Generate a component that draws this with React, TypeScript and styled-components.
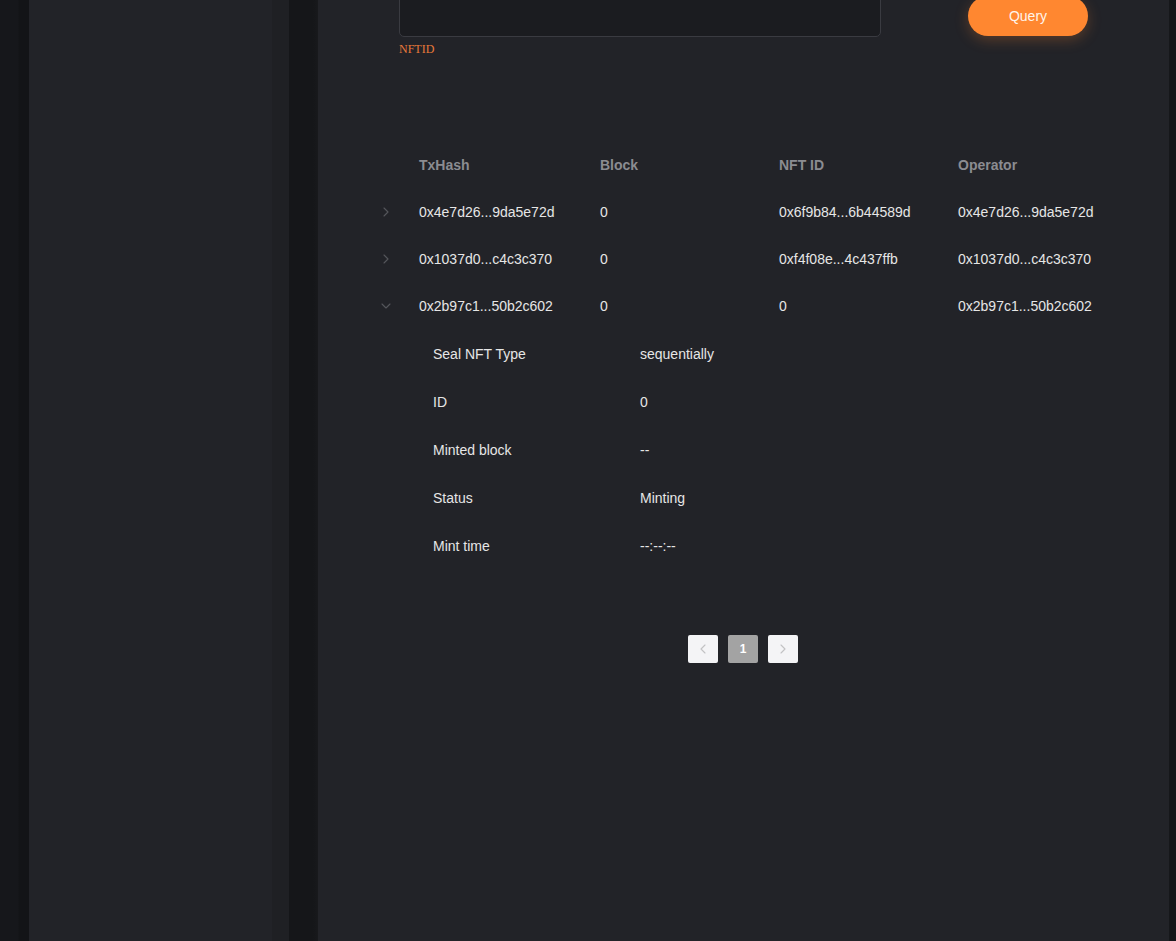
import React from "react";
import styled, { createGlobalStyle } from "styled-components";

const GlobalStyle = createGlobalStyle`
  html, body {
    margin: 0;
    padding: 0;
    background: #16171a;
    height: 100%;
    overflow: hidden;
  }
  #root {
    height: 100%;
  }
`;

const Page = styled.div`
  display: flex;
  height: 941px;
  width: 1176px;
  background: #16171a;
  font-family: "Liberation Sans", Arial, sans-serif;
`;

const SideGutter = styled.div`
  width: 29px;
  background: linear-gradient(90deg, #16171b 0, #16171b 18px, #131417 19px, #131417 29px);
`;

const SidePanel = styled.aside`
  width: 243px;
  background: #222328;
`;

const SideEdge = styled.div`
  width: 17px;
  background: #1f2024;
`;

const Divider = styled.div`
  width: 29px;
  background: linear-gradient(90deg, #151619 0, #151619 24px, #18191c 29px);
`;

const Main = styled.main`
  width: 851px;
  background: #222328;
  display: flex;
  flex-direction: column;
  overflow: hidden;
`;

const RightStrip = styled.div`
  flex: 1;
  background: #16171a;
`;

const FormRow = styled.div`
  display: flex;
  align-items: flex-start;
  margin-top: -5px;
  padding-left: 81px;
  gap: 87px;
`;

const Field = styled.div`
  display: flex;
  flex-direction: column;
`;

const Input = styled.input`
  width: 482px;
  height: 42px;
  box-sizing: border-box;
  background: #1b1c20;
  border: 1px solid #3a3b41;
  border-radius: 5px;
  outline: none;
  color: #e6e6e6;
`;

const FieldLabel = styled.span`
  font-family: "Liberation Serif", "Times New Roman", serif;
  font-size: 12px;
  color: #e8793a;
  margin-top: 5px;
  line-height: 14px;
`;

const QueryButton = styled.button`
  width: 120px;
  height: 40px;
  margin-top: 1px;
  border: none;
  border-radius: 20px;
  background: #ff8730;
  color: #fff4ea;
  font-family: "Liberation Sans", Arial, sans-serif;
  font-size: 14px;
  box-shadow: 0 4px 14px rgba(255, 135, 48, 0.25);
`;

const Table = styled.div`
  margin-top: 85px;
  margin-left: 48px;
  display: flex;
  flex-direction: column;
`;

const Row = styled.div<{ $head?: boolean }>`
  display: grid;
  grid-template-columns: 43px 181px 179px 179px 180px;
  height: 47px;
  align-items: center;
  font-size: 14px;
  color: ${(p) => (p.$head ? "#8b8c91" : "#e6e6e6")};
  font-weight: ${(p) => (p.$head ? 700 : 400)};
`;

const Cell = styled.div`
  padding-left: 10px;
  white-space: nowrap;
`;

const ExpandCell = styled.div`
  display: flex;
  justify-content: center;
  align-items: center;
  padding-right: 4px;
`;

const Detail = styled.div`
  display: flex;
  flex-direction: column;
  padding-left: 67px;
  padding-top: 1px;
`;

const DetailRow = styled.div`
  display: grid;
  grid-template-columns: 207px 1fr;
  height: 48px;
  align-items: center;
  font-size: 14px;
  color: #e6e6e6;
`;

const Pager = styled.div`
  display: flex;
  justify-content: center;
  gap: 10px;
  margin-top: 65px;
  padding-right: 1px;
`;

const PageButton = styled.div<{ $active?: boolean }>`
  width: 30px;
  height: 28px;
  border-radius: 2px;
  display: flex;
  align-items: center;
  justify-content: center;
  background: ${(p) => (p.$active ? "#a3a3a3" : "#f4f4f6")};
  color: #ffffff;
  font-size: 12px;
  font-weight: 700;
`;

function Chevron({ dir, color }: { dir: "left" | "right" | "down"; color: string }) {
  const d =
    dir === "right" ? "M2 1 L6 5 L2 9" : dir === "left" ? "M6 1 L2 5 L6 9" : "M1 2 L5 6 L9 2";
  const w = dir === "down" ? 10 : 8;
  const h = dir === "down" ? 8 : 10;
  return (
    <svg width={w} height={h} viewBox={`0 0 ${w} ${h}`} fill="none">
      <path d={d} stroke={color} strokeWidth="1.1" strokeLinecap="round" strokeLinejoin="round" />
    </svg>
  );
}

const rows = [
  { tx: "0x4e7d26...9da5e72d", block: "0", nft: "0x6f9b84...6b44589d", op: "0x4e7d26...9da5e72d", open: false },
  { tx: "0x1037d0...c4c3c370", block: "0", nft: "0xf4f08e...4c437ffb", op: "0x1037d0...c4c3c370", open: false },
  { tx: "0x2b97c1...50b2c602", block: "0", nft: "0", op: "0x2b97c1...50b2c602", open: true },
];

const details = [
  ["Seal NFT Type", "sequentially"],
  ["ID", "0"],
  ["Minted block", "--"],
  ["Status", "Minting"],
  ["Mint time", "--:--:--"],
];

export default function App() {
  return (
    <Page>
      <GlobalStyle />
      <SideGutter />
      <SidePanel />
      <SideEdge />
      <Divider />
      <Main>
        <FormRow>
          <Field>
            <Input />
            <FieldLabel>NFTID</FieldLabel>
          </Field>
          <QueryButton>Query</QueryButton>
        </FormRow>

        <Table>
          <Row $head>
            <ExpandCell />
            <Cell>TxHash</Cell>
            <Cell>Block</Cell>
            <Cell>NFT ID</Cell>
            <Cell>Operator</Cell>
          </Row>
          {rows.map((r) => (
            <React.Fragment key={r.tx}>
              <Row>
                <ExpandCell>
                  <Chevron dir={r.open ? "down" : "right"} color="#55565b" />
                </ExpandCell>
                <Cell>{r.tx}</Cell>
                <Cell>{r.block}</Cell>
                <Cell>{r.nft}</Cell>
                <Cell>{r.op}</Cell>
              </Row>
              {r.open && (
                <Detail>
                  {details.map(([k, v]) => (
                    <DetailRow key={k}>
                      <span>{k}</span>
                      <span>{v}</span>
                    </DetailRow>
                  ))}
                </Detail>
              )}
            </React.Fragment>
          ))}
        </Table>

        <Pager>
          <PageButton>
            <Chevron dir="left" color="#c2c2c4" />
          </PageButton>
          <PageButton $active>1</PageButton>
          <PageButton>
            <Chevron dir="right" color="#c2c2c4" />
          </PageButton>
        </Pager>
      </Main>
      <RightStrip />
    </Page>
  );
}
